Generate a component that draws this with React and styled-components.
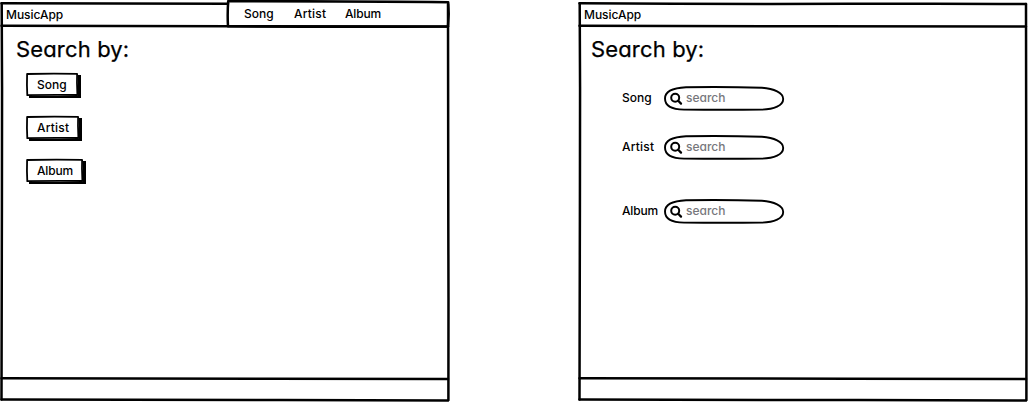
import React from "react";
import styled, { createGlobalStyle } from "styled-components";

const GlobalStyle = createGlobalStyle`
  *, *::before, *::after { box-sizing: border-box; }
  html, body { margin: 0; padding: 0; background: #fff; overflow: hidden; }
  body {
    color: #000;
    font-family: Inter, "Open Sans", sans-serif;
    font-feature-settings: "cv11";
    font-size: 12px;
    font-weight: 500;
    line-height: 16px;
  }
`;

const Page = styled.main`
  display: flex;
  justify-content: space-between;
  width: 1028px;
  height: 402px;
`;

const Window = styled.section`
  position: relative;
  display: flex;
  flex-direction: column;
  width: 450px;
  height: 402px;
`;

const Ink = styled.svg`
  position: absolute;
  inset: 0;
  width: 100%;
  height: 100%;
  overflow: visible;
  pointer-events: none;
  fill: none;
  stroke: #000;
  stroke-width: ${(p) => p.$weight || 2.5};
  stroke-linejoin: round;
  stroke-linecap: round;
`;

const Header = styled.header`
  display: flex;
  height: 26px;
  padding-top: 6px;
`;

const Brand = styled.div`
  width: ${(p) => p.$width};
  padding: 1px 0 0 6px;
  letter-spacing: -0.05px;
`;

const Nav = styled.nav`
  display: flex;
  gap: 20px;
`;

const NavItem = styled.a`
  width: ${(p) => p.$width}px;
  white-space: nowrap;
  letter-spacing: ${(p) => p.$spacing || 0}px;
`;

const Content = styled.div`
  flex: 1;
  padding: 9px 0 0 ${(p) => p.$inset}px;
`;

const Footer = styled.footer`
  height: 24px;
`;

const Title = styled.h1`
  margin: 0;
  font-size: 22px;
  font-weight: 400;
  line-height: 28px;
  letter-spacing: 0.15px;
  -webkit-text-stroke: 0.25px #000;
`;

const ButtonList = styled.div`
  display: flex;
  flex-direction: column;
  align-items: flex-start;
  gap: 20px;
  padding: 10px 0 0 10px;
`;

const Button = styled.button`
  position: relative;
  width: ${(p) => p.$width}px;
  height: 23px;
  padding: 0 0 0 11px;
  border: 0;
  background: #fff;
  box-shadow: 3px 2px 0 #000;
  color: #000;
  font: inherit;
  font-feature-settings: inherit;
  text-align: left;
  white-space: nowrap;
  letter-spacing: ${(p) => p.$spacing || 0}px;
`;

const Form = styled.form`
  display: flex;
  flex-direction: column;
  padding: 23px 0 0 31px;
`;

const Field = styled.label`
  display: flex;
  align-items: center;
  height: 25px;
  margin-bottom: ${(p) => p.$after}px;
`;

const FieldName = styled.span`
  width: 42px;
  padding-bottom: 1px;
  white-space: nowrap;
  letter-spacing: ${(p) => p.$spacing || 0}px;
`;

const SearchBox = styled.span`
  position: relative;
  display: flex;
  align-items: center;
  gap: 4px;
  width: 120px;
  height: 25px;
  padding: 0 0 1px 6px;
  color: #77777c;
  letter-spacing: 0;
`;

const Magnifier = styled.svg`
  width: 12px;
  height: 12px;
  margin-top: 2px;
  overflow: visible;
  fill: none;
  stroke: #000;
  stroke-width: 2;
  stroke-linecap: round;
`;

const spacing = { Song: 0, Artist: 0.2, Album: -0.15 };

function WindowInk({ nav }) {
  return (
    <Ink viewBox="0 0 450 402">
      <path d={nav ? "M1.5 3.3Q90 4 228 3.8" : "M1.5 3.3Q150 4.2 270 3.8T448 4"} />
      <path d="M1.7 3.2C2.3 70 2 150 1.9 210S2 330 1.5 399.5" />
      <path d="M448 4C448.7 80 448.1 150 448.3 220S448.6 320 448.4 400" />
      <path d="M1.5 25.7Q120 26.4 230 26.3T448 26.4" />
      <path d="M1.5 378.2Q170 378.6 270 378.8T448 378.9" />
      <path d="M1.5 399.6Q150 400.1 280 400.1T448 400.4" />
      {nav && <path d="M228.2 1.2Q360 1.1 448.2 2.2L448.7 14L448 26.5Q340 27.2 228 26.3Q227.3 14 228.2 1.2Z" />}
    </Ink>
  );
}

function SketchButton({ label, width }) {
  return (
    <Button type="button" $width={width} $spacing={spacing[label]}>
      {label}
      <Ink viewBox={`0 0 ${width} 23`} $weight={1.8}>
        <path d={`M1.1 1Q${width / 2} .3 ${width - 0.9} .9L${width - 1} 10L${width - 0.6} 22Q${width / 2} 21.6 1.3 22.2Q.7 12 1.1 1Z`} />
      </Ink>
    </Button>
  );
}

function SearchField({ label, after }) {
  return (
    <Field $after={after}>
      <FieldName $spacing={spacing[label]}>{label}</FieldName>
      <SearchBox>
        <Ink viewBox="0 0 120 25" $weight={1.9}>
          <path d="M22 1.3Q60 .6 98 1.8C110 2.6 119.2 7 119.2 13C119.2 19.5 110 23.4 98 23.6Q60 24 20 23.6C6 23.4 1 19 1 12.5C1 6 8 2 22 1.3Z" />
        </Ink>
        <Magnifier viewBox="0 0 12 12">
          <circle cx="5.2" cy="4.8" r="4" />
          <path d="M8.2 7.8L11 10.6" strokeWidth="2.3" />
        </Magnifier>
        search
      </SearchBox>
    </Field>
  );
}

export default function App() {
  return (
    <>
      <GlobalStyle />
      <Page>
        <Window>
          <WindowInk nav />
          <Header>
            <Brand $width="244px">MusicApp</Brand>
            <Nav>
              <NavItem $width={30} $spacing={spacing.Song}>Song</NavItem>
              <NavItem $width={31} $spacing={spacing.Artist}>Artist</NavItem>
              <NavItem $width={35} $spacing={spacing.Album}>Album</NavItem>
            </Nav>
          </Header>
          <Content $inset={16}>
            <Title>Search by:</Title>
            <ButtonList>
              <SketchButton label="Song" width={52} />
              <SketchButton label="Artist" width={53} />
              <SketchButton label="Album" width={57} />
            </ButtonList>
          </Content>
          <Footer />
        </Window>
        <Window>
          <WindowInk />
          <Header>
            <Brand $width="100%">MusicApp</Brand>
          </Header>
          <Content $inset={13}>
            <Title>Search by:</Title>
            <Form>
              <SearchField label="Song" after={24} />
              <SearchField label="Artist" after={39} />
              <SearchField label="Album" after={0} />
            </Form>
          </Content>
          <Footer />
        </Window>
      </Page>
    </>
  );
}
